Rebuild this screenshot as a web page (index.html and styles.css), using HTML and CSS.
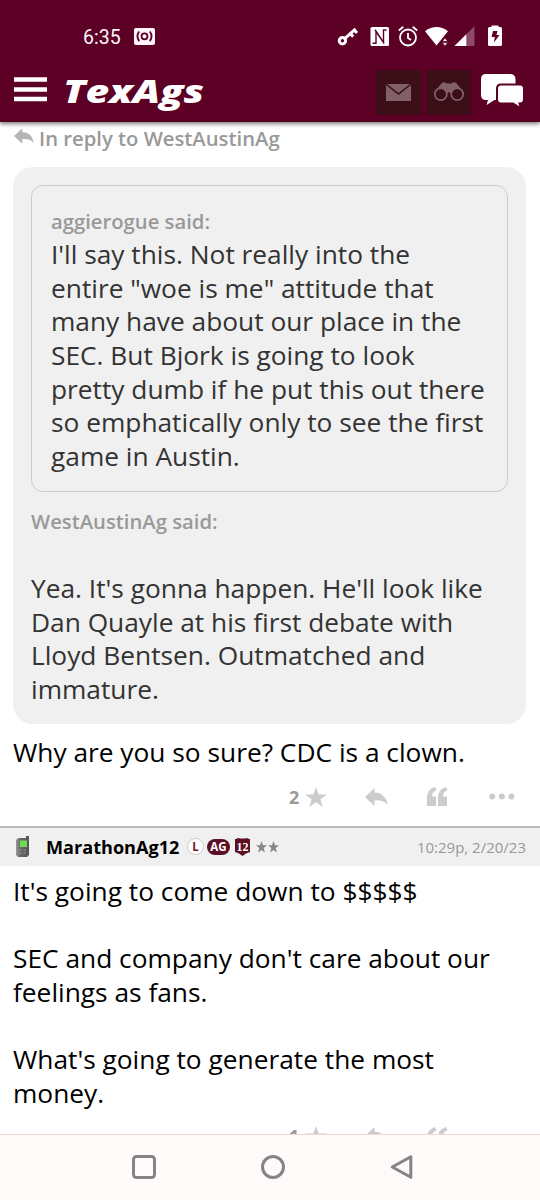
FILE: index.html
```html
<!DOCTYPE html>
<html lang="en">
<head>
<meta charset="utf-8">
<title>TexAgs</title>
<link rel="stylesheet" href="styles.css">
</head>
<body>
<div class="screen">
  <header class="top">
    <div class="status">
      <span class="clock">6:35</span>
      <svg class="cast" width="21" height="17" viewBox="0 0 21 17"><rect width="21" height="17" rx="2" fill="#fff5fa"/><g fill="none" stroke="#5c0025" stroke-width="1.800"><circle cx="10.500" cy="8.300" r="3"/><path d="M5.200 3.500q-3.600 4.800 0 9.600M15.800 3.500q3.600 4.800 0 9.600"/></g></svg>
      <svg class="indicators" width="166" height="24" viewBox="337 24 166 24">
        <g fill="none" stroke="#fff" stroke-width="3"><circle cx="342.400" cy="40.700" r="3.200"/><path d="M345 38.300L355.600 28.800M350.200 33.500L353.200 36.600M354.200 30L357 33"/></g>
        <rect x="370.500" y="27" width="18.500" height="19" rx="1.500" fill="#fff"/><path d="M372.500 43.200h3.500V31l8 12.200M375 30l8.500 12.500V30h3" fill="none" stroke="#5c0025" stroke-width="1.400"/>
        <g fill="none" stroke="#fff" stroke-width="1.800"><circle cx="408" cy="37.500" r="8"/><path d="M408 33v5l3 2M398.800 30.500l4.500-3.800M417.200 30.500l-4.500-3.800"/></g>
        <path d="M425 31.200Q436.500 22.800 448 31.200L436.500 45.500z" fill="#fff"/><path d="M442.300 41.500l2.700-3.500 2.700 3.500zM442.300 42.700l2.700 3.500 2.700-3.500z" fill="#fff" stroke="#5c0025" stroke-width=".7"/>
        <path d="M474.500 26v20H454.500z" fill="#8d496a"/><path d="M466.300 34.200V46H454.500z" fill="#fff"/>
        <path d="M491.500 25.500h7V27h2q1.500 0 1.500 1.500V44.500q0 1.500-1.500 1.500h-11q-1.500 0-1.500-1.500V28.500Q488 27 489.500 27h2z" fill="#fff"/><path d="M493 31h4.500l-1 4h3L494 42.500l.8-5.500H491.500z" fill="#5c0025"/>
      </svg>
    </div>
    <div class="bar">
      <svg class="menu" width="33" height="25" viewBox="0 0 33 25"><path d="M0 2.500h33M0 12.500h33M0 22h33" stroke="#fff" stroke-width="4.500"/></svg>
      <svg class="logo" width="148" height="48" viewBox="0 0 148 48"><text x="0" y="35" textLength="141" lengthAdjust="spacingAndGlyphs">TexAgs</text></svg>
      <span class="tile"><svg width="25" height="17" viewBox="0 0 25 17"><path d="M0 1L12.500 11 25 1V17H0z" fill="#826069"/><path d="M1 0h23L12.500 9z" fill="#826069"/></svg></span>
      <span class="tile"><svg width="30" height="20" viewBox="0 0 30 20"><path d="M3 7L8 .8Q10.500-.8 12.500 1.500h5Q19.500-.8 22 .8L27 7 17 11.500 15 10 13 11.500z" fill="#826069"/><g fill="#3b0e18" stroke="#826069" stroke-width="1.700"><circle cx="6.800" cy="12.200" r="6"/><circle cx="23.200" cy="12.200" r="6"/></g></svg></span>
      <svg class="chat" width="43" height="35" viewBox="0 0 43 35"><path d="M5 0h24q5.500 0 5.500 5.500v17q0 3.500-4 3.500H13.500L5.500 31 7 26H5q-5 0-5-5V5q0-5 5-5z" fill="#fff"/><path d="M20 10.500h19q4 0 4 4V25q0 4.500-4 4.500h-.5l1.500 5-8-5H20q-4 0-4-4v-11q0-4 4-4z" fill="#fff" stroke="#5c0025" stroke-width="2"/></svg>
    </div>
  </header>

  <main class="thread">
    <article class="post">
      <div class="replying"><svg width="20" height="16" viewBox="0 0 23 18"><path d="M0 9L9.500 0v4.500Q20 4.500 23 17 18 11.500 9.500 12.500V18z" fill="#b5b5b5"/></svg><span>In reply to WestAustinAg</span></div>
      <blockquote class="quote">
        <blockquote class="inner">
          <div class="said">aggierogue said:</div>
          <p class="text">I'll say this. Not really into the<br>entire "woe is me" attitude that<br>many have about our place in the<br>SEC. But Bjork is going to look<br>pretty dumb if he put this out there<br>so emphatically only to see the first<br>game in Austin.</p>
        </blockquote>
        <div class="said outer-said">WestAustinAg said:</div>
        <p class="text outer-text">Yea. It's gonna happen. He'll look like<br>Dan Quayle at his first debate with<br>Lloyd Bentsen. Outmatched and<br>immature.</p>
      </blockquote>
      <p class="text body">Why are you so sure? CDC is a clown.</p>
      <div class="actions">
        <span class="count">2</span>
        <svg class="star" width="22" height="20" viewBox="0 0 22 20"><path d="M11 0l2.700 7.400H22l-6.700 4.800L17.800 20 11 15.300 4.200 20l2.500-7.800L0 7.400h8.300z"/></svg>
        <svg class="reply" width="23" height="18" viewBox="0 0 23 18"><path d="M0 9L9.500 0v4.500Q20 4.500 23 17 18 11.500 9.500 12.500V18z"/></svg>
        <svg class="cite" width="21" height="19" viewBox="0 0 21 19"><path d="M8 0L9.500 3.200Q5 4.500 5 9.500H9V19H0V10.500Q0 2.500 8 0zM19 0l1.500 3.200Q16 4.500 16 9.500H20V19H11V10.500Q11 2.500 19 0z"/></svg>
        <svg class="more" width="26" height="7" viewBox="0 0 26 7"><circle cx="3.200" cy="3.500" r="3"/><circle cx="12.800" cy="3.500" r="3"/><circle cx="22.400" cy="3.500" r="3"/></svg>
      </div>
    </article>

    <article class="post2">
      <div class="byline">
        <svg width="13" height="22" viewBox="0 0 13 22"><defs><linearGradient id="phone"><stop offset="0" stop-color="#999"/><stop offset=".35" stop-color="#666"/><stop offset="1" stop-color="#555"/></linearGradient></defs><path d="M2 2h8V0h3v19l-2 2H2l-2-2V4z" fill="url(#phone)"/><rect x="4" y="4.500" width="7" height="6.500" fill="#6bdd4e"/><path d="M3 14h2.500M7.500 14H10M3 17h2.500M7.500 17H10" stroke="#999"/></svg>
        <span class="name">MarathonAg12</span>
        <span class="badge letter">L</span>
        <span class="badge ag">AG</span>
        <svg class="shield" width="15" height="18" viewBox="0 0 15 18"><path d="M0 1q2 0 3-1 4.500 1 9 0 1 1 3 1v13l-4 1.500L7.500 18 4 15.500 0 14z" fill="#5c1024"/><text x="7.500" y="12.500" text-anchor="middle" textLength="12" lengthAdjust="spacingAndGlyphs">12</text></svg>
        <svg class="ranks" width="23" height="12" viewBox="0 0 23 12"><path d="M5.500 0L7 4.200h4L7.700 7 9 11.500 5.500 9 2 11.500 3.300 7 0 4.200h4zM17.500 0L19 4.200h4L19.700 7 21 11.500 17.500 9 14 11.500 15.300 7 12 4.200h4z" fill="#888"/></svg>
        <span class="time">10:29p, 2/20/23</span>
      </div>
      <p class="text reply-text">It's going to come down to $$$$$<br><br>SEC and company don't care about our<br>feelings as fans.<br><br>What's going to generate the most<br>money.</p>
      <div class="actions clipped">
        <span class="count">1</span>
        <svg class="star" width="22" height="20" viewBox="0 0 22 20"><path d="M11 0l2.700 7.400H22l-6.700 4.800L17.800 20 11 15.300 4.200 20l2.500-7.800L0 7.400h8.300z"/></svg>
        <svg class="reply" width="23" height="18" viewBox="0 0 23 18"><path d="M0 9L9.500 0v4.500Q20 4.500 23 17 18 11.500 9.500 12.500V18z"/></svg>
        <svg class="cite" width="21" height="19" viewBox="0 0 21 19"><path d="M8 0L9.500 3.200Q5 4.500 5 9.500H9V19H0V10.500Q0 2.500 8 0zM19 0l1.500 3.200Q16 4.500 16 9.500H20V19H11V10.500Q11 2.500 19 0z"/></svg>
      </div>
    </article>
  </main>

  <nav class="system">
    <svg width="24" height="24" viewBox="0 0 24 24"><rect x="1.500" y="1.500" width="21" height="21" rx="3"/></svg>
    <svg width="24" height="24" viewBox="0 0 24 24"><circle cx="12" cy="12" r="10.500"/></svg>
    <svg width="24" height="24" viewBox="0 0 24 24"><path d="M20.800 1.800V22.200L2.300 12z" stroke-linejoin="round"/></svg>
  </nav>
</div>
</body>
</html>
```
FILE: styles.css
```css
* { box-sizing: border-box; }
body { margin: 0; font-family: "Open Sans", sans-serif; background: #fff; }
p, blockquote { margin: 0; }
svg { display: block; flex: none; }
.screen { width: 540px; height: 1200px; display: flex; flex-direction: column; overflow: hidden; }
.top { flex: none; height: 122px; background: #5c0025; box-shadow: 0 2px 4px rgba(0,0,0,.5); position: relative; }
.status { height: 68px; padding: 4px 37px 0 83px; display: flex; align-items: center; }
.clock { font: 400 19.5px Roboto, sans-serif; color: #fff5fa; width: 51px; padding-top: 2px; }
.indicators { margin-left: auto; }
.bar { display: flex; align-items: center; height: 48px; padding: 0 16px 0 14px; }
.menu { margin-top: -5px; }
.logo { margin-left: 16px; }
.logo text { font: italic 800 32px "Open Sans", sans-serif; fill: #fff; }
.tile { width: 45px; height: 45px; border-radius: 3px; background: #3b0e18; display: flex; align-items: center; justify-content: center; margin-left: 5px; }
.logo + .tile { margin-left: auto; }
.chat { margin: -2px 0 0 10px; }
.thread { flex: 1; min-height: 0; overflow: hidden; }
.replying { display: flex; align-items: center; gap: 5px; height: 32px; padding-left: 14px; color: #999; font-size: 20.25px; font-weight: 600; }
.replying svg { margin-top: -4px; }
.quote { margin: 13px 14px 0 13px; padding: 18px 18px 0; height: 557px; border-radius: 20px; background: #f0f0f0; color: #333; }
.inner { height: 307px; border: 1px solid #ccc; border-radius: 12px; padding: 21px 0 0 19px; }
.said { font-size: 20.25px; font-weight: 600; line-height: 28px; color: #999; white-space: nowrap; }
.text { font-size: 26.3px; line-height: 33.65px; white-space: nowrap; }
.inner .text { margin-top: 3px; }
.outer-said { margin-top: 15px; }
.outer-text { margin-top: 37px; }
.body { padding: 12px 0 0 13px; }
.actions { display: flex; align-items: center; height: 40px; padding-left: 289px; fill: #ccc; }
.count { font-size: 18px; font-weight: 700; color: #999; width: 16px; }
.reply { margin-left: 38px; }
.cite { margin-left: 39px; }
.more { margin-left: 41px; }
.body + .actions { margin-top: 7px; }
.clipped { margin-top: 6px; }
.byline { display: flex; align-items: center; height: 40px; margin-top: 9px; padding: 0 14px 0 16px; background: #f0f0f0; border-top: 2px solid #bbb; }
.name { font-size: 18.1px; font-weight: 700; margin-left: 17px; width: 141px; white-space: nowrap; }
.badge { height: 16px; border-radius: 9px; font-size: 11.5px; font-weight: 700; line-height: 16px; text-align: center; }
.letter { width: 17px; height: 17px; background: #fff; color: #6b1429; border: 1px solid #ccc; line-height: 15px; }
.ag { width: 23px; margin-left: 3px; background: #5c1024; color: #fff; }
.shield { margin-left: 5px; }
.shield text { font: bold 13px "Liberation Serif", serif; fill: #fff; }
.ranks { margin-left: 6px; }
.time { margin-left: auto; font-size: 15px; color: #999; white-space: nowrap; }
.reply-text { padding: 9px 0 0 13px; }
.system { flex: none; height: 66px; border-top: 1px solid #f2d6d4; background: #fffafa; display: flex; gap: 105px; padding: 20px 0 0 132px; fill: none; stroke: #858383; stroke-width: 3; }
```
